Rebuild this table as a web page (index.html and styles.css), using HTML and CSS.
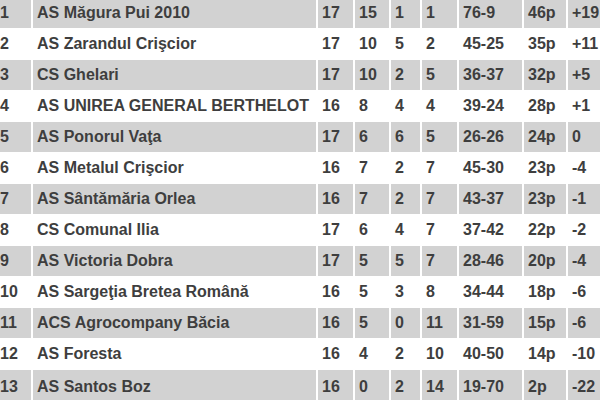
FILE: index.html
```html
<!DOCTYPE html>
<html lang="ro">
<head>
<meta charset="utf-8">
<title>Clasament</title>
<link rel="stylesheet" href="styles.css">
</head>
<body>
<div class="table">
  <div class="row shade"><div class="c rank">1</div><div class="c">AS Măgura Pui 2010</div><div class="c">17</div><div class="c">15</div><div class="c">1</div><div class="c">1</div><div class="c">76-9</div><div class="c">46p</div><div class="c">+19</div></div>
  <div class="row"><div class="c rank">2</div><div class="c">AS Zarandul Crişcior</div><div class="c">17</div><div class="c">10</div><div class="c">5</div><div class="c">2</div><div class="c">45-25</div><div class="c">35p</div><div class="c">+11</div></div>
  <div class="row shade"><div class="c rank">3</div><div class="c">CS Ghelari</div><div class="c">17</div><div class="c">10</div><div class="c">2</div><div class="c">5</div><div class="c">36-37</div><div class="c">32p</div><div class="c">+5</div></div>
  <div class="row"><div class="c rank">4</div><div class="c">AS UNIREA GENERAL BERTHELOT</div><div class="c">16</div><div class="c">8</div><div class="c">4</div><div class="c">4</div><div class="c">39-24</div><div class="c">28p</div><div class="c">+1</div></div>
  <div class="row shade"><div class="c rank">5</div><div class="c">AS Ponorul Vaţa</div><div class="c">17</div><div class="c">6</div><div class="c">6</div><div class="c">5</div><div class="c">26-26</div><div class="c">24p</div><div class="c">0</div></div>
  <div class="row"><div class="c rank">6</div><div class="c">AS Metalul Crişcior</div><div class="c">16</div><div class="c">7</div><div class="c">2</div><div class="c">7</div><div class="c">45-30</div><div class="c">23p</div><div class="c">-4</div></div>
  <div class="row shade"><div class="c rank">7</div><div class="c">AS Sântămăria Orlea</div><div class="c">16</div><div class="c">7</div><div class="c">2</div><div class="c">7</div><div class="c">43-37</div><div class="c">23p</div><div class="c">-1</div></div>
  <div class="row"><div class="c rank">8</div><div class="c">CS Comunal Ilia</div><div class="c">17</div><div class="c">6</div><div class="c">4</div><div class="c">7</div><div class="c">37-42</div><div class="c">22p</div><div class="c">-2</div></div>
  <div class="row shade"><div class="c rank">9</div><div class="c">AS Victoria Dobra</div><div class="c">17</div><div class="c">5</div><div class="c">5</div><div class="c">7</div><div class="c">28-46</div><div class="c">20p</div><div class="c">-4</div></div>
  <div class="row"><div class="c rank">10</div><div class="c">AS Sargeţia Bretea Română</div><div class="c">16</div><div class="c">5</div><div class="c">3</div><div class="c">8</div><div class="c">34-44</div><div class="c">18p</div><div class="c">-6</div></div>
  <div class="row shade"><div class="c rank">11</div><div class="c">ACS Agrocompany Băcia</div><div class="c">16</div><div class="c">5</div><div class="c">0</div><div class="c">11</div><div class="c">31-59</div><div class="c">15p</div><div class="c">-6</div></div>
  <div class="row"><div class="c rank">12</div><div class="c">AS Foresta</div><div class="c">16</div><div class="c">4</div><div class="c">2</div><div class="c">10</div><div class="c">40-50</div><div class="c">14p</div><div class="c">-10</div></div>
  <div class="row shade last"><div class="c rank">13</div><div class="c">AS Santos Boz</div><div class="c">16</div><div class="c">0</div><div class="c">2</div><div class="c">14</div><div class="c">19-70</div><div class="c">2p</div><div class="c">-22</div></div>
</div>
</body>
</html>
```

FILE: styles.css
```css
html, body {
  margin: 0;
  padding: 0;
  background: #ffffff;
  overflow: hidden;
}

.table {
  margin-top: -2px;
  font-family: "Liberation Sans", Arial, sans-serif;
  font-weight: bold;
  font-size: 16px;
  color: #3e3e3e;
}

.row {
  display: grid;
  grid-template-columns: 31px 283px 35px 34px 29px 35px 63px 42px 32px;
  column-gap: 2px;
  height: 31px;
}

.c {
  display: flex;
  align-items: center;
  padding-left: 4px;
  height: 30px;
  white-space: nowrap;
  overflow: hidden;
}

.c.rank {
  padding-left: 0;
}

.row.shade .c {
  background: #d2d2d2;
}

.row.last .c {
  height: 34px;
  padding-bottom: 4px;
}
```
